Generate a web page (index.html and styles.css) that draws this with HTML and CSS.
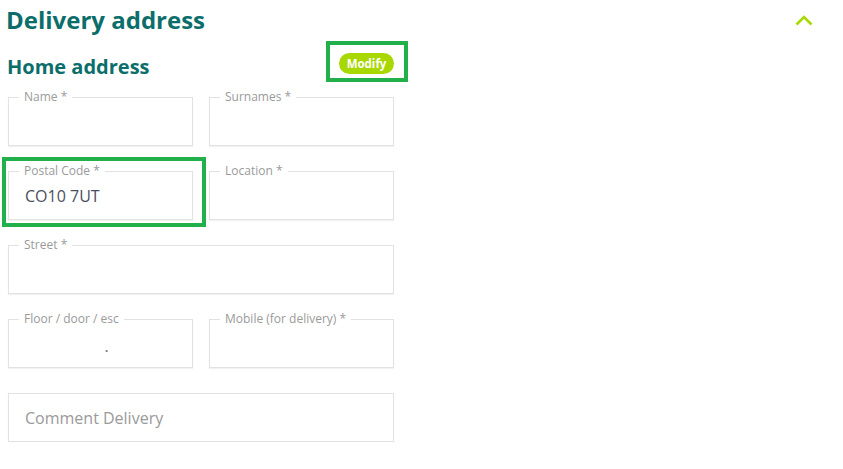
FILE: index.html
```html
<!DOCTYPE html>
<html lang="en">
<head>
<meta charset="utf-8">
<title>Delivery address</title>
<link rel="stylesheet" href="styles.css">
</head>
<body>
<div class="page">
  <header class="header">
    <h1 class="title">Delivery address</h1>
    <svg class="chevron" width="18" height="12" viewBox="0 0 18 12"><polyline points="1.5,10.5 9,3 16.5,10.5" fill="none" stroke="#a8d800" stroke-width="2.6"/></svg>
  </header>
  <div class="subhead">
    <h2 class="subtitle">Home address</h2>
    <div class="pill-wrap">
      <span class="pill">Modify</span>
      <span class="mark mark-pill"></span>
    </div>
  </div>
  <div class="form">
    <div class="field"><span class="label">Name *</span></div>
    <div class="field"><span class="label">Surnames *</span></div>
    <div class="field"><span class="label">Postal Code *</span><span class="value">CO10 7UT</span><span class="mark mark-field"></span></div>
    <div class="field"><span class="label">Location *</span></div>
    <div class="field wide"><span class="label">Street *</span></div>
    <div class="field"><span class="label">Floor / door / esc</span><span class="value dot">.</span></div>
    <div class="field"><span class="label">Mobile (for delivery) *</span></div>
    <div class="field wide"><span class="placeholder">Comment Delivery</span></div>
  </div>
</div>
</body>
</html>
```
FILE: styles.css
```css
* { box-sizing: border-box; }
html, body { margin: 0; padding: 0; background: #fff; }
body { font-family: "Open Sans", "Noto Sans", sans-serif; }
.page { padding: 0 0 0 8px; }
.header {
  display: flex;
  justify-content: space-between;
  align-items: flex-start;
  padding-top: 4px;
  padding-right: 30px;
}
.title {
  margin: 0 0 0 -2px;
  font-size: 24px;
  line-height: 32px;
  font-weight: 700;
  color: #0b6e6b;
}
.chevron { margin-top: 10px; display: block; }
.subhead {
  width: 386px;
  display: flex;
  justify-content: space-between;
  align-items: flex-start;
  margin-top: 16px;
}
.subtitle {
  margin: 0 0 0 -1px;
  font-size: 20px;
  line-height: 30px;
  font-weight: 700;
  color: #0b6e6b;
}
.pill-wrap { position: relative; margin-top: 1px; }
.pill {
  display: block;
  width: 55px;
  height: 21px;
  border-radius: 11px;
  background: #a8d800;
  color: #fff;
  font-size: 11.5px;
  font-weight: 700;
  line-height: 21px;
  text-align: center;
}
.mark {
  position: absolute;
  border: 4px solid #22b04b;
  pointer-events: none;
}
.mark-pill { left: -13px; top: -12px; width: 82px; height: 41px; }
.form {
  margin-top: 15px;
  display: grid;
  grid-template-columns: 185px 185px;
  column-gap: 16px;
  row-gap: 25px;
}
.field {
  position: relative;
  height: 49px;
  border: 1px solid #e2e2e2;
  box-shadow: 0 1px 1px rgba(0,0,0,0.05);
  display: flex;
  align-items: center;
  padding-left: 16px;
}
.field.wide { grid-column: 1 / 3; }
.label {
  position: absolute;
  left: 10px;
  top: -10px;
  padding: 0 5px;
  background: #fff;
  font-size: 12px;
  line-height: 18px;
  color: #9a9a9a;
}
.value {
  font-size: 16px;
  color: #4a5060;
  padding-top: 1px;
}
.value.dot {
  width: 100%;
  text-align: center;
  margin-left: -2px;
  color: #6a6f7a;
  padding-top: 4px;
}
.placeholder {
  font-size: 16px;
  color: #9a9a9a;
}
.mark-field { left: -7px; top: -15px; width: 204px; height: 70px; }
```
